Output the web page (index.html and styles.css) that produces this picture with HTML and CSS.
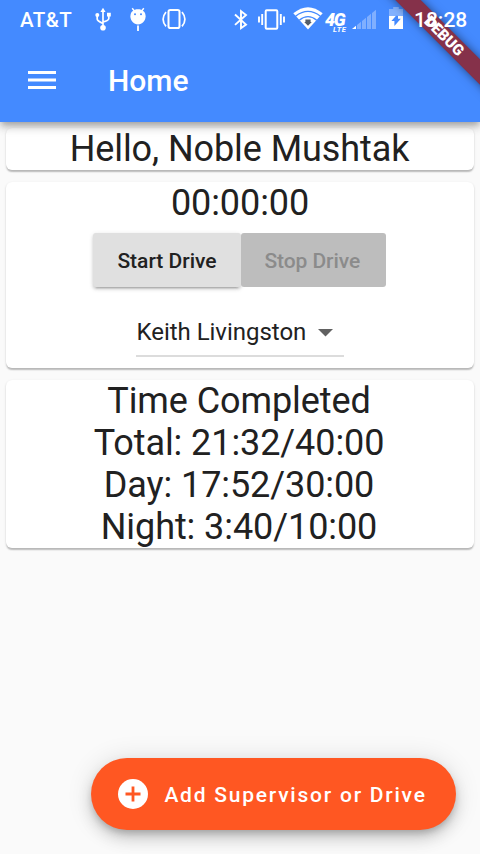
FILE: index.html
```html
<!DOCTYPE html>
<html lang="en">
<head>
<meta charset="utf-8">
<title>Home</title>
<link rel="stylesheet" href="styles.css">
</head>
<body>
<div class="screen">
  <header class="top">
    <div class="status">
      <span class="carrier">AT&amp;T</span>
      <svg class="i-usb" viewBox="0 0 16 24" width="16" height="24" fill="none" stroke="#fff" stroke-width="1.7">
        <path d="M8 3V20M2.2 8V12.2Q2.4 14 8 16.6M13.8 8V11.5Q13.6 13.6 8 15"/>
        <path d="M8 .7L10.6 4.9H5.4ZM12 5.8H15.8V9.5H12Z" fill="#fff" stroke="none"/>
        <circle cx="2.3" cy="8" r="2" fill="#fff" stroke="none"/><circle cx="8" cy="20.8" r="2.8" fill="#fff" stroke="none"/>
      </svg>
      <svg class="i-bug" viewBox="0 0 16 24" width="16" height="24">
        <path d="M2.2 1.2L4.2 3.8M13.8 1.2L11.8 3.8" stroke="#fff" stroke-width="1.4"/>
        <path d="M8 2.3C12.5 2.3 15.6 5 15.6 9.2C15.6 13.8 12.2 17.4 8 17.4C3.8 17.4.4 13.8.4 9.2C.4 5 3.5 2.3 8 2.3Z" fill="#fff"/>
        <circle cx="5" cy="7.2" r="1" fill="#448aff"/><circle cx="11" cy="7.2" r="1" fill="#448aff"/>
        <path d="M8 18.6V24" stroke="#fff" stroke-width="1.8"/>
      </svg>
      <svg class="i-rotate" viewBox="0 0 24 22" width="24" height="22" fill="none" stroke="#fff">
        <rect x="6.5" y="1.9" width="11" height="18.2" rx="1.8" stroke-width="2"/>
        <path d="M4 4Q-1.8 11.2 4 18.4M20 4Q25.8 11.2 20 18.4" stroke-width="1.7"/>
      </svg>
      <svg class="i-bt" viewBox="0 0 14 22" width="14" height="22" fill="none" stroke="#fff" stroke-width="1.9">
        <path d="M1 5.5L12 15.6L7 19.2V2.2L12 6L1 15.9"/>
      </svg>
      <svg class="i-vib" viewBox="0 0 28 22" width="28" height="22" fill="none" stroke="#fff">
        <rect x="7.7" y="1.2" width="11.6" height="18.6" rx="1" stroke-width="2"/>
        <path d="M1 7.5V13.5M4.2 5V16M22.8 5V16M26 7.5V13.5" stroke-width="1.9"/>
      </svg>
      <svg class="i-wifi" viewBox="0 0 30 23" width="30" height="23">
        <path d="M.3 6.2Q15-5.8 29.7 6.2L15 22.5Z" fill="#fff"/>
        <path d="M2.6 9.2Q15-.4 27.4 9.2M6.3 13.2Q15 6 23.7 13.2" fill="none" stroke="#448aff" stroke-width="1.3"/>
        <path d="M12.4 12.5H17.6V15H18.8L15 18.8L11.2 15H12.4Z" fill="#555e69"/>
      </svg>
      <span class="network"><b>4G</b><small>LTE</small></span>
      <svg class="i-signal" viewBox="0 0 25 21" width="25" height="21" fill="#fff">
        <path d="M0 20L4 16.8V20Z"/>
        <path d="M5 16L9 12.7V20H5ZM10 12L14 8.7V20H10ZM15 8L19 4.7V20H15ZM20 4L24 .7V20H20Z" opacity=".32"/>
      </svg>
      <svg class="i-battery" viewBox="0 0 14 22" width="14" height="22">
        <path d="M4.2 0H9.8V2H14V9H0V2H4.2Z" fill="#fff" opacity=".34"/>
        <path d="M0 9H14V22H0Z" fill="#fff"/>
        <path d="M9 8.8V11.8H11.8L5.4 19V14H2.4L7 8.8Z" fill="#448aff"/>
      </svg>
      <span class="clock">18:28</span>
    </div>
    <div class="appbar">
      <svg class="menu" viewBox="0 0 28 20" width="28" height="20" fill="#fff">
        <path d="M0 1H28V4H0ZM0 8.5H28V11.5H0ZM0 16H28V19H0Z"/>
      </svg>
      <h1>Home</h1>
    </div>
  </header>
  <main>
    <section class="card">Hello, Noble Mushtak</section>
    <section class="card">
      <div>00:00:00</div>
      <div class="buttons">
        <button class="start">Start Drive</button>
        <button class="stop" disabled>Stop Drive</button>
      </div>
      <div class="picker">
        <div class="select">
          <span>Keith Livingston</span>
          <svg viewBox="0 0 15 8" width="15" height="8"><path d="M0 0H15L7.5 7.5Z" fill="#616161"/></svg>
        </div>
      </div>
    </section>
    <section class="card totals">
      <div>Time Completed</div>
      <div>Total: 21:32/40:00</div>
      <div>Day: 17:52/30:00</div>
      <div>Night: 3:40/10:00</div>
    </section>
  </main>
  <button class="fab">
    <svg viewBox="0 0 30 30" width="30" height="30"><circle cx="15" cy="15" r="15" fill="#fff"/><path d="M15 7.5V22.5M7.5 15H22.5" stroke="#ff5722" stroke-width="2.8"/></svg>
    <span>Add Supervisor or Drive</span>
  </button>
  <div class="ribbon">DEBUG</div>
</div>
</body>
</html>
```
FILE: styles.css
```css
* { box-sizing: border-box; }
body { margin: 0; font-family: Roboto, sans-serif; color: #212121; }
button { border: 0; font: 500 21px/24px Roboto, sans-serif; padding: 0; }
svg { display: block; flex: none; }
.screen { position: relative; width: 480px; height: 854px; overflow: hidden; background: #fafafa; }

.top {
  position: relative; height: 122px; background: #448aff; color: #fff;
  box-shadow: 0 3px 6px -1.5px rgba(0,0,0,.2), 0 6px 7.5px rgba(0,0,0,.14), 0 1.5px 15px rgba(0,0,0,.12);
}
.status { display: flex; align-items: flex-start; height: 38px; padding: 7px 0 0 20px; }
.carrier, .clock { font-weight: 500; font-size: 20px; line-height: 26px; white-space: nowrap; }
.carrier { width: 75px; font-size: 20.5px; letter-spacing: .4px; }
.i-bug { margin-left: 19px; }
.i-rotate { margin: 1px 0 0 16px; }
.i-bt { margin: 2px 0 0 48px; }
.i-vib { margin: 2px 0 0 10px; }
.i-wifi { margin-left: 7px; }
.network { width: 29px; height: 30px; margin-left: 2px; font-style: italic; }
.network b { display: block; font-size: 18px; line-height: 26px; font-weight: 900; letter-spacing: -1.4px; }
.network small { display: block; margin: -8px 0 0 8px; font-size: 7.5px; line-height: 9px; font-weight: 700; letter-spacing: .6px; }
.i-signal { margin: 2px 0 0 -2px; }
.i-battery { margin-left: 12px; }
.clock { position: relative; z-index: 2; margin-left: 11px; font-size: 21px; }

.appbar { display: flex; align-items: center; height: 84px; padding-left: 28px; }
h1 { margin: 2px 0 0 52px; font-size: 30px; font-weight: 500; line-height: 36px; }

main { display: flex; flex-direction: column; gap: 12px; padding: 6px; }
.card {
  border-radius: 6px; background: #fff; text-align: center; font-size: 36px; line-height: 42px;
  letter-spacing: -.08px;
  box-shadow: 0 3px 1.5px -1.5px rgba(0,0,0,.1), 0 1.5px 1.5px rgba(0,0,0,.12), 0 1px 3px rgba(0,0,0,.1);
}
.card:first-child { padding-right: 1px; }
.totals { padding-right: 2px; }
.buttons { display: flex; justify-content: center; align-items: center; height: 72px; padding-right: 1px; letter-spacing: 0; }
.start, .stop { height: 54px; border-radius: 3px; padding: 2px 0 0; }
.start {
  width: 147.5px; background: #e0e0e0; color: #212121;
  box-shadow: 0 4.5px 1.5px -3px rgba(0,0,0,.15), 0 2px 3px rgba(0,0,0,.14), 0 1.5px 5px rgba(0,0,0,.1);
}
.stop { position: relative; width: 145px; padding-right: 2px; background: #bdbdbd; color: #8b8b8b; letter-spacing: -.07px; }
.picker { display: flex; justify-content: center; height: 72px; letter-spacing: -.03px; }
.select {
  display: flex; align-items: center; width: 208px; height: 61px; padding: 12px 11px 0 .5px;
  justify-content: space-between; border-bottom: 2px solid #dcdcdc; font-size: 24px; line-height: 28px;
}
.select svg { margin-top: 2px; }

.fab {
  position: absolute; right: 24px; bottom: 24px; display: flex; align-items: center;
  width: 364.6px; height: 72px; padding-left: 26.6px; gap: 16.4px; border-radius: 36px;
  background: #ff5722; color: #fff; letter-spacing: 1.77px; white-space: nowrap;
  box-shadow: 0 4.5px 7.5px -1.5px rgba(0,0,0,.2), 0 9px 15px rgba(0,0,0,.14), 0 1.5px 27px rgba(0,0,0,.12);
}
.fab span { padding-top: 2px; }
.ribbon {
  position: absolute; left: 364px; top: 27px; z-index: 1; width: 160px; height: 18px;
  transform: rotate(45deg); background: #85314a; color: #fff; text-align: center;
  font-size: 15.3px; line-height: 18px; font-weight: 900; box-shadow: 0 0 10px rgba(0,0,0,.5);
}
```
